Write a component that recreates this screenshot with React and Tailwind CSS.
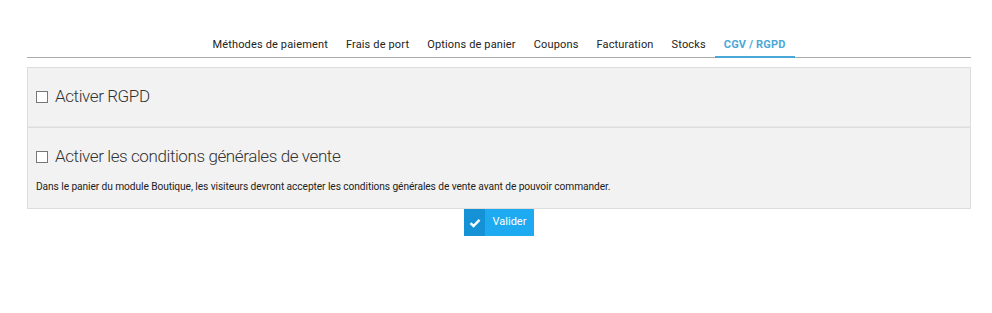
const tabs = [
  "Méthodes de paiement",
  "Frais de port",
  "Options de panier",
  "Coupons",
  "Facturation",
  "Stocks",
  "CGV / RGPD",
];

const Section = ({ label, children, className }) => (
  <div className={"px-[8px] " + className}>
    <label className="flex items-center gap-[7px] text-[#333]">
      <span className="w-[12px] h-[12px] border border-[#777] bg-white shrink-0" />
      <span className="text-[17px] font-light tracking-[-0.4px] leading-none">
        {label}
      </span>
    </label>
    {children}
  </div>
);

export default function App() {
  return (
    <div className="w-[992px] h-[313px] bg-white font-['Roboto',sans-serif]">
      <div className="pl-[27px] pr-[21px] pt-[37px]">
        <div className="flex justify-center border-b border-[#aaa]">
          {tabs.map((tab) => (
            <div
              key={tab}
              className={
                tab === "CGV / RGPD"
                  ? "px-[9px] pb-[4px] text-[11px] tracking-[0.15px] leading-[15px] font-bold text-[#4aa8d8] border-b-2 border-[#4aa8d8] -mb-[1px]"
                  : "px-[9px] pb-[5px] text-[11px] tracking-[0.15px] leading-[15px] text-[#222]"
              }
            >
              {tab}
            </div>
          ))}
        </div>

        <div className="mt-[9px] bg-[#f2f2f2] border border-[#ddd]">
          <Section label="Activer RGPD" className="pt-[20px] pb-[21px]" />
          <div className="h-[2px] bg-[#ddd] border-t border-[#e8e8e8]" />
          <Section label="Activer les conditions générales de vente" className="pt-[20px] pb-[15px]">
            <p className="mt-[16px] text-[10.2px] tracking-[-0.08px] leading-[12px] text-[#222]">
              Dans le panier du module Boutique, les visiteurs devront accepter les conditions générales de vente avant de pouvoir commander.
            </p>
          </Section>
        </div>

        <div className="flex justify-center">
          <button className="flex h-[27px] w-[70px] bg-[#1eaaf1] text-white">
            <span className="w-[21px] h-full bg-[#1592d6] flex items-center justify-center">
              <svg width="12" height="10" viewBox="0 0 12 10">
                <path d="M1.5 5.2 L4.5 8 L10.5 1.8" fill="none" stroke="white" strokeWidth="2.4" />
              </svg>
            </span>
            <span className="flex-1 flex items-center justify-center text-[11px]">Valider</span>
          </button>
        </div>
      </div>
    </div>
  );
}
